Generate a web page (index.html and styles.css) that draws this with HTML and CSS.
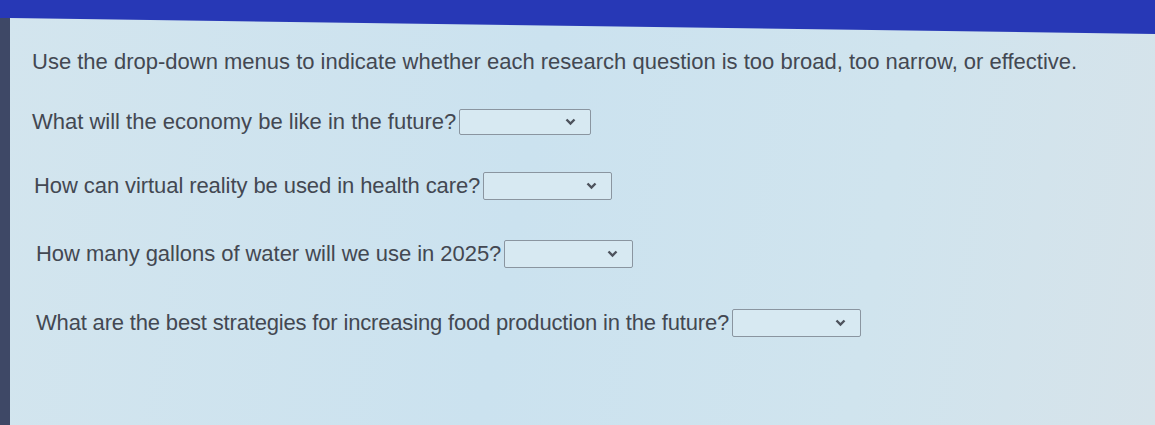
FILE: index.html
```html
<!DOCTYPE html>
<html>
<head>
<meta charset="utf-8">
<link rel="stylesheet" href="styles.css">
</head>
<body>
<div class="topbar"></div>
<div class="frame">
  <div class="strip"></div>
  <main class="content">
    <p class="instructions">Use the drop-down menus to indicate whether each research question is too broad, too narrow, or effective.</p>
    <div class="questions">
      <div class="row r1">
        <span class="q">What will the economy be like in the future?</span>
        <span class="dd"><span class="chev"><svg width="11" height="8" viewBox="0 0 11 8"><path d="M1.5 1.5 L5.5 5.5 L9.5 1.5" fill="none" stroke="#4d525c" stroke-width="2.4"/></svg></span></span>
      </div>
      <div class="row r2">
        <span class="q">How can virtual reality be used in health care?</span>
        <span class="dd"><span class="chev"><svg width="11" height="8" viewBox="0 0 11 8"><path d="M1.5 1.5 L5.5 5.5 L9.5 1.5" fill="none" stroke="#4d525c" stroke-width="2.4"/></svg></span></span>
      </div>
      <div class="row r3">
        <span class="q">How many gallons of water will we use in 2025?</span>
        <span class="dd"><span class="chev"><svg width="11" height="8" viewBox="0 0 11 8"><path d="M1.5 1.5 L5.5 5.5 L9.5 1.5" fill="none" stroke="#4d525c" stroke-width="2.4"/></svg></span></span>
      </div>
      <div class="row r4">
        <span class="q">What are the best strategies for increasing food production in the future?</span>
        <span class="dd"><span class="chev"><svg width="11" height="8" viewBox="0 0 11 8"><path d="M1.5 1.5 L5.5 5.5 L9.5 1.5" fill="none" stroke="#4d525c" stroke-width="2.4"/></svg></span></span>
      </div>
    </div>
  </main>
</div>
</body>
</html>
```
FILE: styles.css
```css
html, body {
  margin: 0;
  padding: 0;
  height: 100%;
}
body {
  background: #2a3ab8;
  font-family: "Liberation Sans", Arial, sans-serif;
  color: #434852;
  overflow: hidden;
}
.topbar {
  height: 18px;
  background: #2738b6;
}
.frame {
  display: flex;
  height: calc(100% - 18px);
  background: linear-gradient(100deg, #d3e5ee 0%, #cbe2ef 45%, #d0e4ee 75%, #d6e3ea 100%);
}
.strip {
  width: 10px;
  background: #3e4866;
  flex: none;
}
.content {
  flex: 1;
  padding: 0 0 0 22px;
  position: relative;
}
.content::before {
  content: "";
  position: absolute;
  left: 0;
  right: 0;
  top: 0;
  height: 16px;
  background: #2738b6;
  clip-path: polygon(0 0, 100% 0, 100% 100%, 0 0);
}
.instructions {
  margin: 33px 0 0 0;
  font-size: 22px;
  line-height: 22px;
  white-space: nowrap;
}
.questions {
  display: flex;
  flex-direction: column;
  margin-top: 35px;
}
.row {
  display: flex;
  align-items: center;
  height: 28px;
  font-size: 22px;
  white-space: nowrap;
}
.q {
  margin-right: 3px;
}
.r2 { margin-top: 36px; padding-left: 2px; letter-spacing: -0.08px; }
.r3 { margin-top: 40px; padding-left: 4px; letter-spacing: -0.04px; }
.r4 { margin-top: 41px; padding-left: 4px; letter-spacing: -0.17px; }
.dd {
  display: flex;
  align-items: center;
  justify-content: flex-end;
  width: 129px;
  height: 28px;
  border: 1.5px solid #8a95a0;
  border-radius: 2px;
  background: #d7e9f2;
  box-sizing: border-box;
  padding-right: 14px;
}
.r1 .dd { width: 132px; height: 26px; }
.chev {
  display: flex;
}
```
